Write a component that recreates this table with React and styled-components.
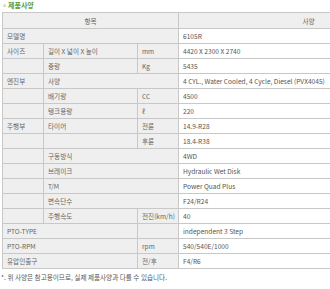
import React from 'react';
import styled, { createGlobalStyle } from 'styled-components';

const GlobalStyle = createGlobalStyle`
  html, body {
    margin: 0;
    padding: 0;
    background: #fff;
    overflow: hidden;
  }
  body {
    font-family: "Noto Sans CJK KR", "Noto Sans", sans-serif;
    color: #555;
  }
`;

const Wrap = styled.div`
  width: 440px;
  padding: 1px 0 0 1px;
`;

const Title = styled.h3`
  margin: 0 0 2px 0;
  font-size: 7px;
  line-height: 9px;
  font-weight: bold;
  color: #5c9b2e;
`;

const Table = styled.table`
  margin-left: 1px;
  width: 437px;
  border-collapse: collapse;
  table-layout: fixed;
  font-size: 6.6px;
  border-top: 1px solid #c8c8c8;
  border-left: 1px solid #c8c8c8;
`;

const Cell = styled.td`
  height: 14px;
  padding: 0 4px;
  border-right: 1px solid #c8c8c8;
  border-bottom: 1px solid #c8c8c8;
  background: ${({ $value }) => ($value ? '#fff' : '#efefef')};
  color: ${({ $value }) => ($value ? '#555' : '#666')};
  text-align: left;
  white-space: nowrap;
  overflow: visible;
  vertical-align: middle;
`;

const HeadCell = styled(Cell).attrs({ as: 'th' })`
  height: 15px;
  font-weight: normal;
  text-align: center;
`;

const Note = styled.p`
  margin: 4px 0 0 0;
  font-size: 6.6px;
  line-height: 9px;
  color: #555;
`;

const rows = [
  [['모델명', 3]],
  [['사이즈'], ['길이 X 넓이 X 높이'], ['mm']],
  [[''], ['중량'], ['Kg']],
  [['엔진부'], ['사양', 2]],
  [[''], ['배기량'], ['CC']],
  [[''], ['탱크용량'], ['ℓ']],
  [['주행부'], ['타이어'], ['전륜']],
  [[''], [''], ['후륜']],
  [[''], ['구동방식', 2]],
  [[''], ['브레이크', 2]],
  [[''], ['T/M', 2]],
  [[''], ['변속단수', 2]],
  [[''], ['주행속도'], ['전진(km/h)']],
  [['PTO-TYPE', 2], ['']],
  [['PTO-RPM', 2], ['rpm']],
  [['유압인출구', 2], ['전/후']],
];

const values = [
  '6105R',
  '4420 X 2300 X 2740',
  '5435',
  '4 CYL., Water Cooled, 4 Cycle, Diesel (PVX4045)',
  '4500',
  '220',
  '14.9-R28',
  '18.4-R38',
  '4WD',
  'Hydraulic Wet Disk',
  'Power Quad Plus',
  'F24/R24',
  '40',
  'independent 3 Step',
  '540/540E/1000',
  'F4/R6',
];

const App = () => (
  <>
    <GlobalStyle />
    <Wrap>
      <Title>◦제품사양</Title>
      <Table>
        <colgroup>
          <col style={{ width: 41 }} />
          <col style={{ width: 94 }} />
          <col style={{ width: 41 }} />
          <col />
        </colgroup>
        <thead>
          <tr>
            <HeadCell colSpan={3}>항목</HeadCell>
            <HeadCell>사양</HeadCell>
          </tr>
        </thead>
        <tbody>
          {rows.map((labels, i) => (
            <tr key={i}>
              {labels.map(([text, span], j) => (
                <Cell key={j} colSpan={span || 1}>{text}</Cell>
              ))}
              <Cell $value>{values[i]}</Cell>
            </tr>
          ))}
        </tbody>
      </Table>
      <Note>*. 위 사양은 참고용이므로, 실제 제품사양과 다를 수 있습니다.</Note>
    </Wrap>
  </>
);

export default App;
